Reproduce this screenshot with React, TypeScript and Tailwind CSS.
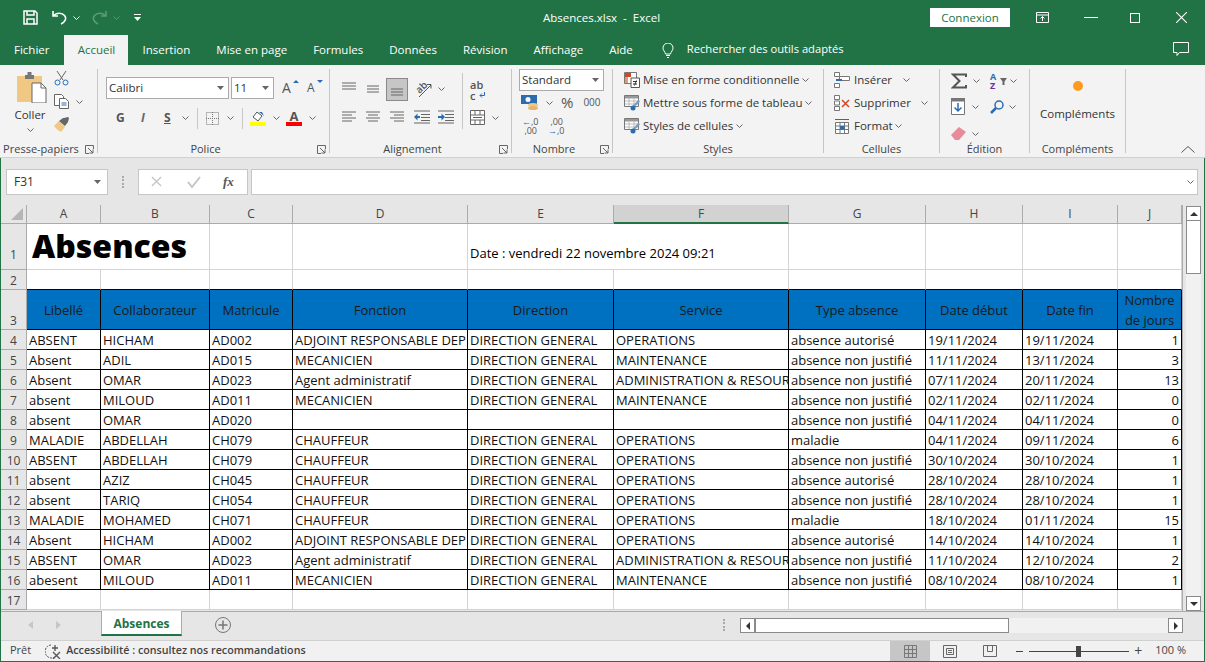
import type { ReactNode } from "react";

const tabs = ["Insertion", "Mise en page", "Formules", "Données", "Révision", "Affichage", "Aide"];
const cols = ["A", "B", "C", "D", "E", "F", "G", "H", "I", "J"];
const heads = ["Libellé", "Collaborateur", "Matricule", "Fonction", "Direction", "Service", "Type absence", "Date début", "Date fin"];

const DG = "DIRECTION GENERAL";
const ANJ = "absence non justifié";
const rows = [
  ["ABSENT", "HICHAM", "AD002", "ADJOINT RESPONSABLE DEP", DG, "OPERATIONS", "absence autorisé", "19/11/2024", "19/11/2024", "1"],
  ["Absent", "ADIL", "AD015", "MECANICIEN", DG, "MAINTENANCE", ANJ, "11/11/2024", "13/11/2024", "3"],
  ["Absent", "OMAR", "AD023", "Agent administratif", DG, "ADMINISTRATION & RESOUR", ANJ, "07/11/2024", "20/11/2024", "13"],
  ["absent", "MILOUD", "AD011", "MECANICIEN", DG, "MAINTENANCE", ANJ, "02/11/2024", "02/11/2024", "0"],
  ["absent", "OMAR", "AD020", "", "", "", ANJ, "04/11/2024", "04/11/2024", "0"],
  ["MALADIE", "ABDELLAH", "CH079", "CHAUFFEUR", DG, "OPERATIONS", "maladie", "04/11/2024", "09/11/2024", "6"],
  ["ABSENT", "ABDELLAH", "CH079", "CHAUFFEUR", DG, "OPERATIONS", ANJ, "30/10/2024", "30/10/2024", "1"],
  ["absent", "AZIZ", "CH045", "CHAUFFEUR", DG, "OPERATIONS", "absence autorisé", "28/10/2024", "28/10/2024", "1"],
  ["absent", "TARIQ", "CH054", "CHAUFFEUR", DG, "OPERATIONS", ANJ, "28/10/2024", "28/10/2024", "1"],
  ["MALADIE", "MOHAMED", "CH071", "CHAUFFEUR", DG, "OPERATIONS", "maladie", "18/10/2024", "01/11/2024", "15"],
  ["Absent", "HICHAM", "AD002", "ADJOINT RESPONSABLE DEP", DG, "OPERATIONS", "absence autorisé", "14/10/2024", "14/10/2024", "1"],
  ["ABSENT", "OMAR", "AD023", "Agent administratif", DG, "ADMINISTRATION & RESOUR", ANJ, "11/10/2024", "12/10/2024", "2"],
  ["abesent", "MILOUD", "AD011", "MECANICIEN", DG, "MAINTENANCE", ANJ, "08/10/2024", "08/10/2024", "1"],
];

const gridCols = "grid grid-cols-[26px_74px_109px_83px_175px_146px_175px_137px_97px_95px_64px]";

function Chev({ className = "" }: { className?: string }) {
  return (
    <svg viewBox="0 0 7 4" className={"w-[7px] h-[4px] shrink-0 " + className} fill="none" stroke="#666" strokeWidth="1">
      <path d="M0.5 0.5 L3.5 3.5 L6.5 0.5" />
    </svg>
  );
}

function Caret({ className = "" }: { className?: string }) {
  return (
    <svg viewBox="0 0 7 4" className={"w-[7px] h-[4px] shrink-0 " + className} fill="#666">
      <path d="M0 0h7L3.500 4z" />
    </svg>
  );
}

function Launcher() {
  return (
    <svg viewBox="0 0 9 9" className="w-[9px] h-[9px]" fill="none" stroke="#666" strokeWidth="1">
      <path d="M8.5 4V.5H.5v8H4M3 3l5 5M8 4.500V8H4.500" />
    </svg>
  );
}

function Group({ label, w, launcher, children }: { label: string; w: string; launcher?: boolean; children: ReactNode }) {
  return (
    <div className={"flex flex-col shrink-0 h-[84px] border-r border-[#c6c6c6] " + w}>
      <div className="h-[72px] shrink-0 min-w-0">{children}</div>
      <div className={"h-[16px] shrink-0 flex items-center justify-center relative text-[11px] text-[#444] whitespace-nowrap " + (launcher ? "pr-[16px]" : "")}>
        {label}
        {launcher && (
          <span className="absolute right-[3px] top-[4px] flex">
            <Launcher />
          </span>
        )}
      </div>
    </div>
  );
}

function Lines({ kind }: { kind: "top" | "mid" | "bot" | "left" | "center" | "right" }) {
  const l = {
    top: ["M0 1h14", "M0 4h14", "M0 7h14"],
    mid: ["M1 4h12", "M1 7h12", "M1 10h12"],
    bot: ["M1 7h12", "M1 10h12", "M1 13h12"],
    left: ["M0 2h14", "M0 5h10", "M0 8h14", "M0 11h10"],
    center: ["M0 2h14", "M2 5h10", "M0 8h14", "M2 11h10"],
    right: ["M0 2h14", "M4 5h10", "M0 8h14", "M4 11h10"],
  }[kind];
  return (
    <svg viewBox="0 0 14 14" className="w-[14px] h-[14px] shrink-0" fill="none" stroke="#666" strokeWidth="1">
      {l.map((d) => (
        <path key={d} d={d} />
      ))}
    </svg>
  );
}

function Indent({ flip }: { flip?: boolean }) {
  return (
    <svg viewBox="0 0 16 14" className="w-[16px] h-[14px] shrink-0" fill="none" strokeWidth="1">
      <path d="M0 1h16M7 4.500h9M7 7.500h9M7 10.500h9M0 13h16" stroke="#666" />
      <path d={flip ? "M0 7h4" : "M2 7h4"} stroke="#2b6cb0" strokeWidth="2" />
      <path d={flip ? "M3.500 3.500L7 7l-3.500 3.500z" : "M3.500 3.500L0 7l3.500 3.500z"} fill="#2b6cb0" />
    </svg>
  );
}

function TableIcon({ accent }: { accent: "cond" | "table" | "cells" }) {
  if (accent === "cond") {
    return (
      <svg viewBox="0 0 16 16" className="w-[16px] h-[16px] shrink-0">
        <path d="M.5.500h12v11H.500z" fill="#fff" stroke="#777" />
        <path d="M1 1h6v4H1z" fill="#d24726" />
        <path d="M1 5h3v6H1z" fill="#e99a6b" />
        <path d="M7 6h8.500v9.500H7z" fill="#fff" stroke="#555" />
        <path d="M9 9.500h4M9 12h4M12.500 8.500l-2 5" stroke="#333" fill="none" />
      </svg>
    );
  }
  return (
    <svg viewBox="0 0 16 16" className="w-[16px] h-[16px] shrink-0">
      <path d="M.5.500h14v11H.500z" fill="#fff" stroke="#777" />
      <path d="M1 1h13v2.500H1z" fill="#999" />
      <path d="M5 3v8M10 3v8M1 6h13M1 9h13" stroke="#bbb" />
      <path d="M14.500 4.500l-5 5.500-1.500 3 3-1.500 5-5z" fill="#7f9fbf" />
      <circle cx="9" cy="13" r="2.500" fill="#2b6cb0" />
    </svg>
  );
}

function StyleRow({ label, accent }: { label: string; accent: "cond" | "table" | "cells" }) {
  return (
    <div className="h-[23px] flex items-center text-[11.5px] text-[#333]">
      <TableIcon accent={accent} />
      <span className="ml-[3px] whitespace-nowrap">{label}</span>
      <Chev className="ml-[3px]" />
    </div>
  );
}

function Sheet() {
  const hdr = "bg-[#e6e6e6] border-r border-b border-[#ababab] text-[12px] text-[#444] flex items-center justify-center";
  const rowNum = "bg-[#e6e6e6] border-r border-b border-[#ababab] text-[12px] leading-[16px] text-[#444] flex items-end justify-center";
  const light = "bg-white border-r border-b border-[#d4d4d4]";
  const headCell = "bg-[#0070c0] border-r border-b border-black text-[#1a1a1a] flex items-center justify-center";
  return (
    <div className={gridCols + " grid-rows-[19px_46px_20px_40px_repeat(14,20px)] text-[13px] w-[1181px]"}>
      <div className={hdr + " relative"}>
        <svg viewBox="0 0 12 12" className="absolute right-[3px] bottom-[3px] w-[12px] h-[12px]">
          <path d="M12 0v12H0z" fill="#b5b5b5" />
        </svg>
      </div>
      {cols.map((c) => (
        <div key={c} className={c === "F" ? "bg-[#d2d2d2] border-r border-[#ababab] border-b-2 border-b-[#217346] text-[12px] text-[#2b5a41] flex items-center justify-center" : hdr}>
          {c}
        </div>
      ))}

      <div className={rowNum + " pb-[6px]"}>1</div>
      <div className={light + " col-span-2 flex items-center pl-[5px] pb-[2px] overflow-hidden"}>
        <span className="text-[32px] font-extrabold text-black leading-none whitespace-nowrap">Absences</span>
      </div>
      <div className={light} />
      <div className={light} />
      <div className={light + " col-span-2 flex items-end pb-[6px] pl-[2px] text-black whitespace-nowrap"}>Date : vendredi 22 novembre 2024 09:21</div>
      <div className={light} />
      <div className={light} />
      <div className={light} />
      <div className={light} />

      <div className={rowNum}>2</div>
      {cols.map((c) => (
        <div key={c} className="bg-white border-r border-[#d4d4d4] border-b border-b-black" />
      ))}

      <div className={rowNum}>3</div>
      {heads.map((h) => (
        <div key={h} className={headCell + " pt-[2px]"}>
          {h}
        </div>
      ))}
      <div className={headCell + " text-center leading-[20px]"}>
        Nombre
        <br />
        de jours
      </div>

      {rows.map((r, i) => (
        <Row key={i} n={i + 4} r={r} rowNum={rowNum} />
      ))}

      <div className={rowNum}>17</div>
      {cols.map((c) => (
        <div key={c} className={light} />
      ))}
    </div>
  );
}

function Row({ n, r, rowNum }: { n: number; r: string[]; rowNum: string }) {
  return (
    <>
      <div className={rowNum}>{n}</div>
      {r.map((v, i) => (
        <div
          key={i}
          className={
            "bg-white border-r border-b border-black text-[#111] overflow-hidden whitespace-nowrap leading-[20px] " +
            (i === 9 ? "text-right pr-[2px]" : "pl-[2px]")
          }
        >
          {v}
        </div>
      ))}
    </>
  );
}

function ScrollBtn({ d, className = "" }: { d: string; className?: string }) {
  return (
    <div className={"w-[15px] h-[15px] bg-white border border-[#8a8a8a] flex items-center justify-center shrink-0 " + className}>
      <svg viewBox="0 0 8 8" className="w-[8px] h-[8px]">
        <path d={d} fill="#333" />
      </svg>
    </div>
  );
}

export default function App() {
  return (
    <div className="w-[1205px] h-[662px] overflow-hidden flex flex-col bg-[#217346] font-['Open_Sans','Noto_Sans',sans-serif]">
      {/* title bar */}
      <div className="h-[35px] flex items-center text-white shrink-0">
        <svg viewBox="0 0 15 15" className="w-[15px] h-[15px] ml-[23px]" fill="none" stroke="#fff" strokeWidth="1.500">
          <path d="M1 1h11l2 2v11H1z" />
          <path d="M4 1v4h7V1M4 14V9h7v5" />
        </svg>
        <svg viewBox="0 0 15 15" className="w-[15px] h-[15px] ml-[14px]" fill="none" stroke="#fff" strokeWidth="1.600">
          <path d="M1 1v5h5M1.500 5.500C5 2.500 10 2.500 12.500 5.500S13 12 9 14" />
        </svg>
        <Chev className="ml-[6px] brightness-[3]" />
        <svg viewBox="0 0 15 15" className="w-[15px] h-[15px] ml-[12px]" fill="none" stroke="#5b9a78" strokeWidth="1.600">
          <path d="M14 1v5H9M13.500 5.500C10 2.500 5 2.500 2.500 5.500S2 12 6 14" />
        </svg>
        <svg viewBox="0 0 7 4" className="w-[7px] h-[4px] ml-[6px]" fill="none" stroke="#5b9a78">
          <path d="M.5.500l3 3 3-3" />
        </svg>
        <svg viewBox="0 0 7 8" className="w-[7px] h-[8px] ml-[14px]" fill="#fff">
          <path d="M0 0h7v1H0zM0 3h7L3.500 7z" />
        </svg>
        <div className="flex-1 text-center text-[11.5px] pl-[132px] pt-px whitespace-nowrap">Absences.xlsx&nbsp; - &nbsp;Excel</div>
        <div className="flex items-center">
          <div className="w-[80px] h-[19px] bg-white text-[#217346] text-[11.5px] flex items-center justify-center mr-[26px]">Connexion</div>
          <svg viewBox="0 0 13 11" className="w-[13px] h-[11px] mr-[35px]" fill="none" stroke="#fff">
            <path d="M.5.500h12v10H.500zM.5 3h12M6.500 9V4.500M4.500 6.500l2-2 2 2" />
          </svg>
          <div className="w-[14px] h-px bg-white mr-[32px]" />
          <div className="w-[10px] h-[10px] border border-white mr-[36px]" />
          <svg viewBox="0 0 10 10" className="w-[11px] h-[11px] mr-[18px]" fill="none" stroke="#fff">
            <path d="M0 0l10 10M10 0L0 10" />
          </svg>
        </div>
      </div>

      {/* tabs */}
      <div className="h-[30px] flex items-center text-[11.5px] text-white shrink-0 pl-[2px] gap-[3px]">
        <div className="h-[30px] px-3 flex items-center pb-[1px]">Fichier</div>
        <div className="h-[30px] w-[64px] flex items-center justify-center pb-[1px] bg-[#f3f3f3] text-[#217346]">Accueil</div>
        <div className="flex gap-[2px] -ml-px">
          {tabs.map((t) => (
            <div key={t} className="h-[30px] px-3 flex items-center pb-[1px] whitespace-nowrap">
              {t}
            </div>
          ))}
        </div>
        <svg viewBox="0 0 12 15" className="w-[12px] h-[15px] ml-[14px]" fill="none" stroke="#fff">
          <path d="M3.500 11C3 8.500 1 7.500 1 5a5 5 0 0 1 10 0c0 2.500-2 3.500-2.500 6zM4 12.500h4M5 14.500h2" />
        </svg>
        <div className="h-[30px] ml-[10px] flex items-center pb-[1px] text-[11.2px] whitespace-nowrap">Rechercher des outils adaptés</div>
        <svg viewBox="0 0 16 15" className="w-[16px] h-[15px] ml-auto mr-[16px] mb-[2px]" fill="none" stroke="#fff">
          <path d="M.5.500h15v10H6.500l-2.500 3v-3H.500z" />
        </svg>
      </div>

      {/* ribbon */}
      <div className="h-[93px] bg-[#f3f3f3] border-b border-[#d0d0d0] flex pt-[4px] pl-[1px] relative shrink-0">
        <Group label="Presse-papiers" w="w-[97px]" launcher>
          <div className="flex h-full">
            <div className="w-[53px] flex flex-col items-center pt-[3px] text-[11.5px] text-[#333]">
              <svg viewBox="0 0 30 31" className="w-[30px] h-[31px] ml-[8px]">
                <path d="M0 4h25v26H0z" fill="#f0c884" />
                <path d="M8 3h9v4H8z M10.500 0h4v3h-4z" fill="#777" />
                <path d="M15 11h9l5 5v15H15z" fill="#fff" stroke="#666" />
                <path d="M24 11v5h5" fill="none" stroke="#666" />
              </svg>
              <span className="mt-[3px] ml-[5px]">Coller</span>
              <Chev className="mt-[5px] ml-[5px]" />
            </div>
            <div className="flex flex-col pt-[1px] gap-[8px]">
              <svg viewBox="0 0 15 16" className="w-[15px] h-[16px]" fill="none" stroke="#666">
                <path d="M3 1l6 9M12 1l-6 9" />
                <circle cx="3.500" cy="12.500" r="2.500" stroke="#2b6cb0" />
                <circle cx="11.500" cy="12.500" r="2.500" stroke="#2b6cb0" />
              </svg>
              <div className="flex items-center">
                <svg viewBox="0 0 15 15" className="w-[15px] h-[15px]" fill="#fff" stroke="#666">
                  <path d="M.5.500h7l2 2v9H.500z" />
                  <path d="M5.500 4.500h6l3 3v7h-9z" />
                  <path d="M7.500 9h5M7.500 11h5" stroke="#2b6cb0" />
                </svg>
                <Chev className="ml-[7px]" />
              </div>
              <svg viewBox="0 0 16 15" className="w-[16px] h-[15px]">
                <path d="M0 9l5-5 6 6-4 5c-2-1-5-3-7-6z" fill="#f0c884" />
                <path d="M5 4l4-3 1 0 4-1 1 1-1 4-3 4z" fill="#666" />
              </svg>
            </div>
          </div>
        </Group>

        <Group label="Police" w="w-[232px]" launcher>
          <div className="flex items-center pl-[8px] pt-[8px] text-[11.5px] text-[#333]">
            <div className="w-[123px] h-[22px] bg-white border border-[#ababab] flex items-center pl-[2px]">
              <span className="flex-1">Calibri</span>
              <Caret className="mr-[4px]" />
            </div>
            <div className="w-[43px] h-[22px] ml-[2px] bg-white border border-[#ababab] flex items-center pl-[2px]">
              <span className="flex-1">11</span>
              <Caret className="mr-[4px]" />
            </div>
            <span className="ml-[8px] w-[13px] text-[14px] text-[#555] leading-none relative">
              A
              <svg viewBox="0 0 6 3" className="absolute w-[6px] h-[3px] top-[-1px] right-[-4px]" fill="#2b6cb0">
                <path d="M0 3h6L3 0z" />
              </svg>
            </span>
            <span className="ml-[12px] w-[13px] text-[12px] text-[#555] leading-none relative">
              A
              <svg viewBox="0 0 6 3" className="absolute w-[6px] h-[3px] top-[-2px] right-[-3px]" fill="#2b6cb0">
                <path d="M0 0h6L3 3z" />
              </svg>
            </span>
          </div>
          <div className="flex items-center pl-[18px] mt-[8px] h-[22px] text-[12px] text-[#555]">
            <b className="w-[10px]">G</b>
            <i className="ml-[15px] w-[8px] font-bold text-[#666]">I</i>
            <span className="ml-[15px] w-[10px] font-bold underline">S</span>
            <Chev className="ml-[8px]" />
            <div className="w-px h-[21px] bg-[#c6c6c6] ml-[8px]" />
            <svg viewBox="0 0 13 13" className="w-[13px] h-[13px] ml-[8px]" fill="none" stroke="#777" strokeDasharray="1 1">
              <path d="M.5.500h12v12H.500zM6.500 0v13M0 6.500h13" />
            </svg>
            <Chev className="ml-[8px]" />
            <div className="w-px h-[21px] bg-[#c6c6c6] ml-[8px]" />
            <div className="ml-[7px] w-[16px] flex flex-col items-center">
              <svg viewBox="0 0 14 11" className="w-[14px] h-[11px]" fill="#fff" stroke="#555">
                <path d="M2 6l4-5 5 4-4 5z" />
                <path d="M8 1h3l2 4z" fill="#2b6cb0" stroke="none" />
              </svg>
              <div className="w-[16px] h-[4px] bg-[#ffff00]" />
            </div>
            <Chev className="ml-[7px]" />
            <div className="ml-[6px] w-[16px] flex flex-col items-center">
              <span className="text-[13px] font-bold leading-[11px] text-[#555]">A</span>
              <div className="w-[16px] h-[4px] bg-[#ff0000]" />
            </div>
            <Chev className="ml-[7px]" />
          </div>
        </Group>

        <Group label="Alignement" w="w-[182px]" launcher>
          <div className="flex h-[62px]">
            <div className="w-[132px] pl-[12px]">
              <div className="flex items-center gap-[10px] h-[34px] pt-[6px]">
                <Lines kind="top" />
                <Lines kind="mid" />
                <div className="w-[22px] h-[23px] bg-[#c6c6c6] border border-[#8a8a8a] flex items-center justify-center -ml-[4px]">
                  <Lines kind="bot" />
                </div>
                <span className="w-[18px] h-[17px] -ml-[4px] relative text-[10px] leading-[10px] text-[#555] font-semibold">
                  <span className="absolute left-[1px] top-[1px] -rotate-45">ab</span>
                  <svg viewBox="0 0 18 17" className="absolute inset-0 w-[18px] h-[17px]" fill="none" stroke="#555">
                    <path d="M5 16L17 4M13 3.500h4v4" />
                  </svg>
                </span>
                <Chev className="-ml-[4px]" />
              </div>
              <div className="flex items-center gap-[10px] h-[21px] mt-[3px]">
                <Lines kind="left" />
                <Lines kind="center" />
                <Lines kind="right" />
                <Indent />
                <div className="-ml-[2px]">
                  <Indent flip />
                </div>
              </div>
            </div>
            <div className="border-l border-[#c6c6c6] pl-[7px] h-[56px] mt-[4px]">
              <div className="h-[34px] text-[11px] leading-[11px] text-[#555] pt-[6px] font-semibold relative">
                ab
                <br />c
                <svg viewBox="0 0 6 6" className="absolute left-[9px] top-[19px] w-[6px] h-[6px]" fill="none" stroke="#2b6cb0">
                  <path d="M5.500 0v3.500H1M3 1.500L1 3.500l2 2" />
                </svg>
              </div>
              <div className="flex items-center mt-[3px]">
                <svg viewBox="0 0 15 15" className="w-[15px] h-[15px]" fill="#fff" stroke="#666">
                  <path d="M.5.500h14v14H.500zM.5 5h14M.5 10h14M5 0v5M10 0v5M5 10v5M10 10v5" />
                  <path d="M3 7.500h9" stroke="#2b6cb0" />
                </svg>
                <Chev className="ml-[7px]" />
              </div>
            </div>
          </div>
        </Group>

        <Group label="Nombre" w="w-[101px]" launcher>
          <div className="pl-[7px] text-[11.5px] text-[#333]">
            <div className="w-[85px] h-[22px] bg-white border border-[#ababab] flex items-center pl-[2px]">
              <span className="flex-1">Standard</span>
              <Caret className="mr-[4px]" />
            </div>
            <div className="flex items-center h-[17px] mt-[3px] pl-[2px]">
              <svg viewBox="0 0 18 16" className="w-[18px] h-[16px]">
                <path d="M0 0h16v9H0z" fill="#2b6cb0" />
                <circle cx="7" cy="4.500" r="2.500" fill="#fff" />
                <ellipse cx="12" cy="10" rx="5" ry="2" fill="#f0c884" />
                <ellipse cx="12" cy="13" rx="5" ry="2" fill="#e8b56a" />
              </svg>
              <Chev className="ml-[7px]" />
              <span className="ml-[8px] text-[15px] text-[#555] leading-none">%</span>
              <span className="ml-[10px] text-[10px] text-[#555]">000</span>
            </div>
            <div className="flex items-center h-[18px] mt-[6px] pl-[3px] gap-[11px] text-[9px] leading-[9px] text-[#555]">
              <div className="w-[15px] text-right">
                <span className="text-[#2b6cb0]">←</span>,0
                <br />
                ,00
              </div>
              <div className="w-[15px] text-right">
                ,00
                <br />
                <span className="text-[#2b6cb0]">→</span>,0
              </div>
            </div>
          </div>
        </Group>

        <Group label="Styles" w="w-[211px]">
          <div className="pl-[11px] -mt-px">
            <StyleRow label="Mise en forme conditionnelle" accent="cond" />
            <StyleRow label="Mettre sous forme de tableau" accent="table" />
            <StyleRow label="Styles de cellules" accent="cells" />
          </div>
        </Group>

        <Group label="Cellules" w="w-[116px]">
          <div className="pl-[10px] -mt-px text-[11.5px] text-[#333]">
            <div className="h-[23px] flex items-center">
              <svg viewBox="0 0 16 16" className="w-[16px] h-[16px]" fill="#fff" stroke="#777">
                <path d="M.5.500h5v4h-5zM5.500 4.500h10v4h-10zM.5 11.500h5v4h-5z" />
                <path d="M2 8h6" stroke="#2b6cb0" strokeWidth="2" />
              </svg>
              <span className="ml-[4px]">Insérer</span>
              <Chev className="ml-[11px]" />
            </div>
            <div className="h-[23px] flex items-center">
              <svg viewBox="0 0 16 16" className="w-[16px] h-[16px]" fill="#fff" stroke="#777">
                <path d="M.5.500h5v4h-5zM.5 11.500h5v4h-5zM.5 6h5v4h-5z" />
                <path d="M8 5l7 7M15 5l-7 7" stroke="#d24726" strokeWidth="1.500" />
              </svg>
              <span className="ml-[4px]">Supprimer</span>
              <Chev className="ml-[10px]" />
            </div>
            <div className="h-[23px] flex items-center">
              <svg viewBox="0 0 16 16" className="w-[16px] h-[16px]" fill="#fff" stroke="#777">
                <path d="M1.500 4.500h13v11h-13zM1.500 8h13M1.500 11.500h13M6 4.500v11M10.500 4.500v11" />
                <path d="M6 8h4.500v3.500H6z" fill="#2b6cb0" stroke="none" />
                <path d="M1 1.500h14" stroke="#2b6cb0" />
              </svg>
              <span className="ml-[4px]">Format</span>
              <Chev className="ml-[2px]" />
            </div>
          </div>
        </Group>

        <Group label="Édition" w="w-[90px]">
          <div className="pl-[11px]">
            <div className="h-[24px] flex items-center">
              <svg viewBox="0 0 16 16" className="w-[16px] h-[16px] shrink-0" fill="none" stroke="#555" strokeWidth="2">
                <path d="M15 4V1.500H2L8.500 8 2 14.500h13V12" />
              </svg>
              <Chev className="ml-[6px]" />
              <span className="ml-[10px] w-[10px] text-[9px] leading-[9px] font-bold">
                <span className="text-[#2b6cb0]">A</span>
                <br />
                <span className="text-[#7030a0]">Z</span>
              </span>
              <svg viewBox="0 0 7 7" className="w-[7px] h-[7px]" fill="#666">
                <path d="M0 0h7L4.500 3.500V7h-2V3.500z" />
              </svg>
              <Chev className="ml-[3px]" />
            </div>
            <div className="h-[27px] flex items-center">
              <svg viewBox="0 0 14 17" className="w-[14px] h-[17px]" fill="#fff" stroke="#777">
                <path d="M.5.500h13v16h-13z" />
                <path d="M0 0h14v3H0z" fill="#777" />
                <path d="M7 5v8M3.500 9.500L7 13l3.500-3.500" fill="none" stroke="#2b6cb0" strokeWidth="1.500" />
              </svg>
              <Chev className="ml-[7px]" />
              <svg viewBox="0 0 14 14" className="w-[14px] h-[14px] ml-[11px]" fill="none" stroke="#2b6cb0" strokeWidth="1.500">
                <circle cx="9" cy="5" r="4" />
                <path d="M6 8l-5 5" strokeWidth="2.500" />
              </svg>
              <Chev className="ml-[5px]" />
            </div>
            <div className="h-[27px] flex items-center">
              <svg viewBox="0 0 15 13" className="w-[15px] h-[13px]">
                <path d="M0 8l8-8 7 5-7 8H4z" fill="#e98a9a" />
              </svg>
              <Chev className="ml-[6px]" />
            </div>
          </div>
        </Group>

        <Group label="Compléments" w="w-[96px]">
          <div className="flex flex-col items-center pt-[12px] text-[11.5px] text-[#333]">
            <div className="w-[10px] h-[10px] rounded-full bg-[#ff9a1f]" />
            <span className="mt-[14px]">Compléments</span>
          </div>
        </Group>

        <svg viewBox="0 0 14 7" className="absolute right-[10px] bottom-[4px] w-[14px] h-[7px]" fill="none" stroke="#555">
          <path d="M.5 6.500l6.500-6 6.500 6" />
        </svg>
      </div>

      {/* formula bar */}
      <div className="h-[47px] bg-[#e6e6e6] flex items-center pl-[5px] pr-[6px] shrink-0 mx-px">
        <div className="w-[102px] h-[26px] bg-white border border-[#c6c6c6] flex items-center pl-[7px] pr-[6px] text-[12px] text-[#333]">
          <span className="flex-1">F31</span>
          <Caret />
        </div>
        <div className="w-[2px] h-[12px] border-l-2 border-dotted border-[#aaa] ml-[14px]" />
        <div className="w-[110px] h-[26px] ml-[14px] bg-white border border-[#c6c6c6] flex items-center pl-[12px] shrink-0">
          <svg viewBox="0 0 12 12" className="w-[11px] h-[11px]" fill="none" stroke="#c6c6c6" strokeWidth="1.500">
            <path d="M1 1l10 10M11 1L1 11" />
          </svg>
          <svg viewBox="0 0 14 12" className="w-[14px] h-[12px] ml-[25px]" fill="none" stroke="#c6c6c6" strokeWidth="2">
            <path d="M1 6l4 5 8-10" />
          </svg>
          <i className="ml-[22px] text-[13px] font-['Liberation_Serif',serif] font-bold text-[#555]">fx</i>
        </div>
        <div className="flex-1 h-[26px] ml-[3px] bg-white border border-[#c6c6c6] flex items-center justify-end pr-[3px]">
          <Chev />
        </div>
      </div>

      {/* sheet */}
      <div className="h-[406px] bg-[#e6e6e6] flex shrink-0 overflow-hidden mx-px">
        <div className="w-[1181px] h-[406px] overflow-hidden border-r border-[#ababab] box-content">
          <Sheet />
        </div>
        <div className="w-[15px] ml-[3px] h-[405px] mt-px bg-[#f1f1f1] flex flex-col shrink-0">
          <ScrollBtn d="M0 6L4 2l4 4z" />
          <div className="w-[15px] h-[54px] bg-white border border-[#8a8a8a] -mt-px" />
          <div className="flex-1" />
          <ScrollBtn d="M0 2l4 4 4-4z" />
        </div>
      </div>

      {/* sheet tabs */}
      <div className="h-[29px] bg-[#e6e6e6] border-t border-[#ababab] flex items-start shrink-0 mx-px text-[12px]">
        <svg viewBox="0 0 5 8" className="w-[5px] h-[8px] ml-[27px] mt-[9px]" fill="#c6c6c6">
          <path d="M5 0v8L0 4z" />
        </svg>
        <svg viewBox="0 0 5 8" className="w-[5px] h-[8px] ml-[23px] mt-[9px]" fill="#c6c6c6">
          <path d="M0 0v8l5-4z" />
        </svg>
        <div className="w-[81px] h-[25px] ml-[40px] -mt-px pt-[3px] bg-white border-x border-[#ababab] border-b-2 border-b-[#217346] text-[#217346] font-bold flex items-center justify-center">
          Absences
        </div>
        <svg viewBox="0 0 16 16" className="w-[16px] h-[16px] ml-[33px] mt-[5px]" fill="none" stroke="#777">
          <circle cx="8" cy="8" r="7.500" />
          <path d="M8 3.500v9M3.500 8h9" strokeWidth="1.500" />
        </svg>
        <div className="w-[2px] h-[12px] border-l-2 border-dotted border-[#aaa] ml-[492px] mt-[7px]" />
        <div className="w-[443px] h-[15px] ml-[15px] mt-[6px] bg-[#f1f1f1] flex">
          <ScrollBtn d="M6 0v8L2 4z" />
          <div className="w-[254px] h-[15px] bg-white border border-[#8a8a8a]" />
          <ScrollBtn d="M2 0v8l4-4z" className="ml-auto" />
        </div>
      </div>

      {/* status bar */}
      <div className="h-[21px] bg-[#f1f1f1] border-t border-[#d0d0d0] flex items-center text-[11px] text-[#444] shrink-0 mx-px">
        <span className="ml-[9px] mb-px">Prêt</span>
        <svg viewBox="0 0 17 15" className="w-[17px] h-[15px] ml-[14px]" fill="none" stroke="#555">
          <path d="M6 1a6.500 6.500 0 1 0 4 12" strokeDasharray="2 1" />
          <path d="M10 1v6M7 4h6M8 8l7 7M15 8l-7 7" strokeWidth="1.300" />
        </svg>
        <span className="ml-[4px] mb-px text-[10.7px] font-semibold">Accessibilité : consultez nos recommandations</span>
        <div className="ml-auto w-[40px] h-[20px] bg-[#c6c6c6] flex items-center justify-center">
          <svg viewBox="0 0 13 13" className="w-[13px] h-[13px]" fill="none" stroke="#777">
            <path d="M.5.500h12v12H.500zM4.500 0v13M8.500 0v13M0 4.500h13M0 8.500h13" />
          </svg>
        </div>
        <svg viewBox="0 0 14 13" className="w-[14px] h-[13px] ml-[13px]" fill="none" stroke="#666">
          <path d="M.5.500h13v12H.500zM3.500 3.500h7v6h-7zM5 5.500h4M5 7.500h4" />
        </svg>
        <svg viewBox="0 0 14 12" className="w-[14px] h-[12px] ml-[26px]" fill="none" stroke="#666">
          <path d="M.5.500h13v11H.500zM4.500.5v6h5v-6" />
        </svg>
        <div className="w-[7px] h-px bg-[#444] ml-[19px]" />
        <div className="w-[100px] h-px bg-[#444] ml-[6px] relative">
          <div className="absolute left-[47px] top-[-5px] w-[5px] h-[11px] bg-[#444]" />
        </div>
        <span className="ml-[5px] text-[14px] leading-none text-[#444]">+</span>
        <span className="ml-[13px] mr-[18px] mb-px text-[#444] whitespace-nowrap">100 %</span>
      </div>
    </div>
  );
}
